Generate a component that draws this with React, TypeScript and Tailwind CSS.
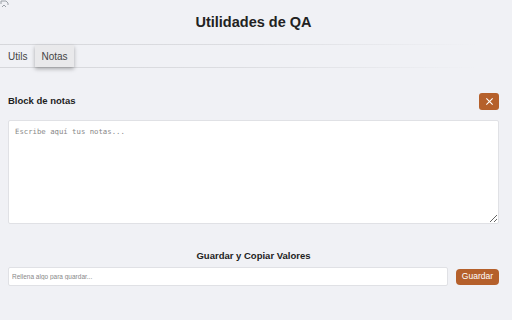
import { useState } from "react";

export default function App() {
  const [tab, setTab] = useState<"utils" | "notas">("notas");
  const [notes, setNotes] = useState("");
  const [value, setValue] = useState("");

  return (
    <div className="min-h-[320px] bg-[#f0f1f5] pl-2 pr-[13px] font-['Liberation_Sans',Arial,sans-serif] text-[#222]">
      <div className="absolute left-0 top-0">
        <svg width="10" height="10" viewBox="0 0 10 10">
          <path d="M1 1h5l2 2v2M1 1v3" stroke="#9aa0a6" strokeWidth="1" fill="none" />
          <path d="M2 7l2-2 2 2" stroke="#9aa0a6" strokeWidth="1" fill="none" />
        </svg>
      </div>
      <h1 className="pt-[12px] text-center text-[14.5px] font-bold leading-[20px]">
        Utilidades de QA
      </h1>
      <div className="-ml-2 mt-[12px] h-px w-[478px] bg-gradient-to-r from-[#d6d7db] via-[#dcdde1] to-transparent" />
      <div className="flex items-end text-[10px] text-[#444]">
        <button
          onClick={() => setTab("utils")}
          className={`h-[22px] pr-[8px] ${tab === "utils" ? "bg-[#e9e9eb] px-1.5 shadow-[0_2px_4px_rgba(0,0,0,0.3)]" : ""}`}
        >
          Utils
        </button>
        <button
          onClick={() => setTab("notas")}
          className={`h-[22px] px-[6px] ${tab === "notas" ? "bg-[#e9e9eb] shadow-[0_2px_4px_rgba(0,0,0,0.3)]" : ""}`}
        >
          Notas
        </button>
      </div>
      <div className="-ml-2 h-px w-[478px] bg-gradient-to-r from-[#d6d7db] via-[#dcdde1] to-transparent" />

      <div className="mt-[25px] flex items-center justify-between">
        <h2 className="text-[9.5px] font-bold">Block de notas</h2>
        <button
          onClick={() => setNotes("")}
          className="flex h-[17px] w-[20px] items-center justify-center rounded-[3px] bg-[#b5602b]"
        >
          <svg width="9" height="9" viewBox="0 0 10 10">
            <path d="M1.5 1.5l7 7M8.5 1.5l-7 7" stroke="white" strokeWidth="1.2" />
          </svg>
        </button>
      </div>
      <textarea
        value={notes}
        onChange={(e) => setNotes(e.target.value)}
        placeholder="Escribe aquí tus notas..."
        className="mt-[10px] block h-[104px] w-full rounded-[2px] border border-[#e0e1e5] bg-white px-[6px] py-[5px] font-['DejaVu_Sans_Mono',monospace] text-[7.3px] leading-[12px] text-[#333] placeholder:text-[#888] focus:outline-none"
      />

      <h2 className="mt-[25px] text-center text-[9.5px] font-bold leading-[14px]">
        Guardar y Copiar Valores
      </h2>
      <div className="mt-[4px] flex items-center gap-2">
        <input
          value={value}
          onChange={(e) => setValue(e.target.value)}
          placeholder="Rellena algo para guardar..."
          className="h-[19px] flex-1 rounded-[2px] border border-[#e0e1e5] bg-white px-[3px] text-[6.5px] text-[#333] placeholder:text-[#888] focus:outline-none"
        />
        <button className="h-[16px] rounded-[4px] bg-[#b5602b] px-[6px] text-[8.5px] text-white">
          Guardar
        </button>
      </div>
    </div>
  );
}
